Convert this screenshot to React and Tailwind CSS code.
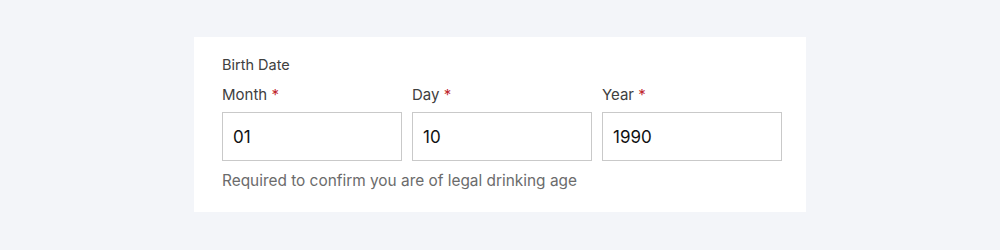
export default function App() {
  const fields = [
    { label: "Month", value: "01" },
    { label: "Day", value: "10" },
    { label: "Year", value: "1990" },
  ];
  return (
    <div
      className="w-[1000px] h-[250px] bg-[#f3f5f9] flex justify-center pt-[37px]"
      style={{ fontFamily: "Inter, 'Open Sans', sans-serif" }}
    >
      <div className="w-[612px] h-[175px] bg-white pl-[28px] pt-[18px]">
        <div className="text-[14.5px] leading-[20px] text-[#404040]">Birth Date</div>
        <div className="mt-[10px] grid grid-cols-[180px_180px_180px] gap-x-[10px]">
          {fields.map((f) => (
            <div key={f.label} className="flex flex-col">
              <label className="text-[15px] leading-[20px] text-[#404040]">
                {f.label} <span className="text-[#c0262d]">*</span>
              </label>
              <input
                readOnly
                value={f.value}
                className="mt-[7px] h-[49px] w-[180px] border border-[#c9c9c9] bg-white px-[10px] text-[17px] text-[#111] outline-none"
                style={{ fontFamily: "Inter, 'Open Sans', sans-serif" }}
              />
            </div>
          ))}
        </div>
        <div className="mt-[10px] text-[15.4px] leading-[20px] text-[#6b6b6b]">
          Required to confirm you are of legal drinking age
        </div>
      </div>
    </div>
  );
}
